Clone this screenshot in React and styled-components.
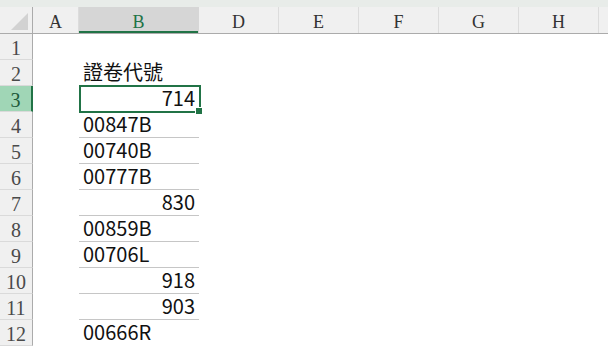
import React from 'react';
import styled, { createGlobalStyle } from 'styled-components';

const GlobalStyle = createGlobalStyle`
  * { margin: 0; padding: 0; box-sizing: border-box; }
  html, body { width: 608px; height: 347px; overflow: hidden; background: #fff; }
  body { font-family: 'Noto Sans CJK TC', 'Noto Sans', sans-serif; }
`;

const GREEN = '#217346';

const Sheet = styled.div`
  width: 608px;
  height: 347px;
  display: flex;
  flex-direction: column;
  overflow: hidden;
  background: #fff;
`;

const TopStrip = styled.div`
  height: 7px;
  flex: none;
  background: #e8ece9;
`;

const HeaderRow = styled.div`
  display: flex;
  height: 27px;
  flex: none;
  background: #f0f0f0;
  border-bottom: 1px solid #ababab;
`;

const Corner = styled.div`
  width: 33px;
  flex: none;
  position: relative;
  border-right: 1px solid #ababab;
  &::after {
    content: '';
    position: absolute;
    right: 4px;
    bottom: 3px;
    width: 0;
    height: 0;
    border-left: 17px solid transparent;
    border-bottom: 17px solid #d2d2d2;
  }
`;

const ColHead = styled.div`
  width: ${p => p.$w}px;
  flex: none;
  display: flex;
  align-items: center;
  justify-content: center;
  font-family: 'Liberation Serif', 'DejaVu Serif', serif;
  font-size: 18px;
  line-height: 18px;
  color: ${p => (p.$active ? GREEN : '#333')};
  background: ${p => (p.$active ? '#d6d6d6' : 'transparent')};
  border-right: 1px solid ${p => (p.$active ? '#d6d6d6' : '#dcdcdc')};
  box-shadow: ${p => (p.$active ? `inset 0 -2px 0 ${GREEN}` : 'none')};
  padding-top: 3px;
`;

const Row = styled.div`
  display: flex;
  height: 26px;
  flex: none;
`;

const RowHead = styled.div`
  width: 33px;
  flex: none;
  display: flex;
  align-items: center;
  justify-content: center;
  font-family: 'Liberation Serif', 'DejaVu Serif', serif;
  font-size: 20px;
  line-height: 20px;
  color: ${p => (p.$active ? '#1e5a3a' : '#4a4a4a')};
  background: ${p => (p.$active ? '#a0d6b6' : '#f0f0f0')};
  border-right: ${p => (p.$active ? `2px solid ${GREEN}` : '1px solid #ababab')};
  border-bottom: 1px solid #dadada;
  padding-top: 2px;
`;

const Cell = styled.div`
  width: ${p => p.$w}px;
  flex: none;
  display: flex;
  align-items: flex-end;
  justify-content: ${p => (p.$num ? 'flex-end' : 'flex-start')};
  padding: 0 4px 3px 4px;
  font-size: 20px;
  line-height: 20px;
  color: #111;
  border-bottom: 1px solid ${p => (p.$line ? '#c6c6c6' : 'transparent')};
  position: relative;
`;

const Selection = styled.div`
  position: absolute;
  left: 0;
  top: -1px;
  right: -2px;
  bottom: -2px;
  border: 2px solid ${GREEN};
  pointer-events: none;
  &::after {
    content: '';
    position: absolute;
    right: -4px;
    bottom: -4px;
    width: 6px;
    height: 6px;
    background: ${GREEN};
    border: 1px solid #fff;
  }
`;

const columns = [
  { key: 'A', w: 46 },
  { key: 'B', w: 120, active: true },
  { key: 'D', w: 80 },
  { key: 'E', w: 80 },
  { key: 'F', w: 80 },
  { key: 'G', w: 80 },
  { key: 'H', w: 80 },
  { key: '', w: 40 },
];

const data = [
  { n: 1, v: '' },
  { n: 2, v: '證卷代號' },
  { n: 3, v: '714', num: true, sel: true },
  { n: 4, v: '00847B', line: true },
  { n: 5, v: '00740B', line: true },
  { n: 6, v: '00777B', line: true },
  { n: 7, v: '830', num: true, line: true },
  { n: 8, v: '00859B', line: true },
  { n: 9, v: '00706L', line: true },
  { n: 10, v: '918', num: true, line: true },
  { n: 11, v: '903', num: true, line: true },
  { n: 12, v: '00666R' },
];

export default function App() {
  return (
    <>
      <GlobalStyle />
      <Sheet>
        <TopStrip />
        <HeaderRow>
          <Corner />
          {columns.map((c, i) => (
            <ColHead key={i} $w={c.w} $active={c.active}>{c.key}</ColHead>
          ))}
        </HeaderRow>
        {data.map(r => (
          <Row key={r.n}>
            <RowHead $active={r.sel}>{r.n}</RowHead>
            <Cell $w={46} />
            <Cell $w={120} $num={r.num} $line={r.line}>
              {r.v}
              {r.sel && <Selection />}
            </Cell>
          </Row>
        ))}
      </Sheet>
    </>
  );
}
